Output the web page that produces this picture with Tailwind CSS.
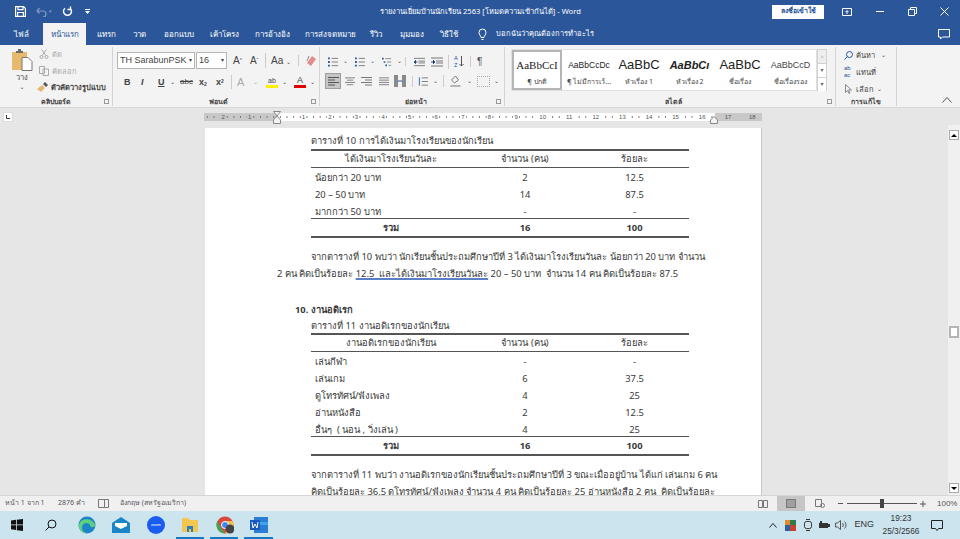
<!DOCTYPE html>
<html lang="th">
<head>
    <meta charset="utf-8">
    <title>รายงานเยี่ยมบ้านนักเรียน 2563 - Word</title>
    <script src="https://cdn.jsdelivr.net/npm/@tailwindcss/browser@4"></script>
</head>

<body class="w-[960px] h-[539px] overflow-hidden flex flex-col bg-[#e6e6e6] text-[#444] font-['Tahoma','Noto_Sans','DejaVu_Sans',sans-serif]">

    <!-- Title bar -->
    <div class="h-[23px] shrink-0 bg-[#2b579a] text-white flex items-center text-[7.6px]">
        <div class="w-[240px] flex items-center pl-[15px]">
            <svg class="w-[11px] h-[11px]" viewBox="0 0 11 11" fill="none" stroke="white" stroke-width="1.2"><path d="M.6.6h8l1.8 1.800v8H.6zM3 .6v3h5v-3M2.600 10.400V6.500h5.800v3.900"/></svg>
            <svg class="w-[11px] h-[10px] ml-[10px] opacity-40" viewBox="0 0 11 10" fill="none" stroke="white" stroke-width="1.200"><path d="M1 4h6a3 3 0 0 1 0 6M3.500 1 1 4l2.500 2.500"/></svg>
            <span class="ml-[2px] text-[5px] opacity-40">▾</span>
            <svg class="w-[11px] h-[11px] ml-[10px]" viewBox="0 0 11 11" fill="none" stroke="white" stroke-width="1.400"><path d="M8 2.200A4 4 0 1 1 3 2.200M8.500 .5v3h-3"/></svg>
            <svg class="w-[5px] h-[5px] ml-[12px]" viewBox="0 0 5 5" fill="white"><path d="M0 0h5v1H0zM0 2h5L2.500 5z"/></svg>
        </div>
        <div class="w-[532px] pl-[140px] whitespace-nowrap">รายงานเยี่ยมบ้านนักเรียน 2563 [โหมดความเข้ากันได้] - Word</div>
        <div class="w-[52px] h-[14px] bg-white text-[#2b579a] flex items-center justify-center text-[7px] font-semibold">ลงชื่อเข้าใช้</div>
        <div class="flex items-center">
            <svg class="w-[10px] h-[8px] ml-[18px]" viewBox="0 0 10 8" fill="none" stroke="white"><path d="M.5.500h9v7h-9zM5 6V3M3.500 4 5 2.500 6.500 4"/></svg>
            <div class="w-[8px] h-px bg-white ml-[24px]"></div>
            <svg class="w-[9px] h-[9px] ml-[24px]" viewBox="0 0 9 9" fill="none" stroke="white"><path d="M.5 2.500h6v6h-6zM2.500 2.500v-2h6v6h-2"/></svg>
            <svg class="w-[9px] h-[9px] ml-[23px]" viewBox="0 0 9 9" fill="none" stroke="white"><path d="m.5.500 8 8M8.500.500l-8 8"/></svg>
        </div>
    </div>

    <!-- Ribbon tabs -->
    <div class="h-[22px] shrink-0 bg-[#2b579a] text-white flex items-center text-[8px] relative">
        <div class="flex items-center w-[478px] pl-[14px]">
            <span class="w-[29px]">ไฟล์</span>
            <span class="w-[43px] h-[22px] bg-[#f3f3f3] text-[#2b579a] flex items-center justify-center mr-[11px]">หน้าแรก</span>
            <span class="w-[36px]">แทรก</span>
            <span class="w-[31px]">วาด</span>
            <span class="w-[46px]">ออกแบบ</span>
            <span class="w-[45px]">เค้าโครง</span>
            <span class="w-[50px]">การอ้างอิง</span>
            <span class="w-[65px]">การส่งจดหมาย</span>
            <span class="w-[30px]">รีวิว</span>
            <span class="w-[40px]">มุมมอง</span>
            <span>วิธีใช้</span>
        </div>
        <svg class="w-[9px] h-[12px]" viewBox="0 0 9 12" fill="none" stroke="white"><path d="M3 9.500C3 7.500 1 7 1 4.500a3.500 3.500 0 0 1 7 0C8 7 6 7.500 6 9.500zM3.500 11.500h2"/></svg>
        <span class="ml-[9px] text-[7.5px]">บอกฉันว่าคุณต้องการทำอะไร</span>
        <svg class="w-[12px] h-[11px] absolute left-[938px] top-[6px]" viewBox="0 0 12 11" fill="none" stroke="white"><path d="M.5.500h11v7.500h-7l-2 2v-2h-2z"/></svg>
    </div>

    <!-- Ribbon -->
    <div class="h-[63px] shrink-0 bg-[#f3f3f3] border-b border-[#d6d6d6] flex text-[7.5px]">
        <!-- Clipboard -->
        <div class="w-[113px] shrink-0 border-r border-[#d4d4d4] mt-[2px] mb-[1px] flex flex-col">
            <div class="flex-1 flex pl-[10px] pt-[2px]">
                <div class="w-[24px] flex flex-col items-center">
                    <svg class="w-[22px] h-[22px]" viewBox="0 0 22 22"><rect x="1" y="3" width="15" height="18" fill="#e6b96e"/><path d="M5 4V2h2V0h3v2h2v2z" fill="#6b6b6b"/><path d="M11 8.500h6l4 4v9H11z" fill="white" stroke="#777"/></svg>
                    <span class="mt-[1px] leading-[11px]">วาง</span>
                    <span class="text-[6px] leading-[8px]">⌄</span>
                </div>
                <div class="pl-[3px] -mt-[1px] flex flex-col gap-[4px] text-[#aaa] leading-[12.5px]">
                    <div class="flex items-center gap-[3px] pl-[2px]"><svg class="w-[10px] h-[10px]" viewBox="0 0 10 10" fill="none" stroke="#aaa"><circle cx="2.500" cy="8" r="1.500"/><circle cx="7.500" cy="8" r="1.500"/><path d="M3 6.500 7.500.5M7 6.500 2.500.5"/></svg>ตัด</div>
                    <div class="flex items-center gap-[3px] pl-[2px]"><svg class="w-[10px] h-[10px]" viewBox="0 0 10 10" fill="none" stroke="#aaa"><path d="M.5.500h5v7h-5zM4 3h5.500v6.500H4z"/></svg>คัดลอก</div>
                    <div class="flex items-center gap-[3px] text-[#444] font-semibold"><svg class="w-[11px] h-[10px]" viewBox="0 0 11 10"><path d="M0 7 5 3l3 3-4 4z" fill="#e6b96e"/><path d="m6 2 2-2 3 3-2 2z" fill="#555"/></svg>ตัวคัดวางรูปแบบ</div>
                </div>
            </div>
            <div class="h-[8px] flex items-center justify-center relative text-[7px] font-semibold">คลิปบอร์ด<span class="absolute right-[3px] top-[1px] w-[5px] h-[5px] border border-[#999]"></span></div>
        </div>
        <!-- Font -->
        <div class="w-[207px] shrink-0 border-r border-[#d4d4d4] mt-[2px] mb-[1px] flex flex-col pl-[4px]">
            <div class="flex items-center pt-[5px] gap-[1px]">
                <div class="w-[78px] h-[17px] bg-white border border-[#b5b5b5] flex items-center justify-between px-[2px] text-[9px]"><span class="font-['Liberation_Sans']">TH SarabunPSK</span><span class="text-[6px]">▾</span></div>
                <div class="w-[31px] h-[17px] bg-white border border-[#b5b5b5] flex items-center justify-between px-[2px] text-[9px]"><span class="font-['Liberation_Sans']">16</span><span class="text-[6px]">▾</span></div>
                <div class="flex items-center pl-[5px] text-[10px] font-['Liberation_Sans']"><span class="w-[17px]">A<sup class="text-[5px]">^</sup></span><span class="w-[15px]">A<sup class="text-[5px]">ˇ</sup></span><span class="w-[33px] border-l border-[#ccc] pl-[5px] whitespace-nowrap">Aa <span class="text-[6px]">⌄</span></span><span class="border-l border-[#ccc] pl-[7px] flex"><svg class="w-[11px] h-[11px]" viewBox="0 0 11 11"><path d="m1 8 5-7 4 3-5 7z" fill="#e58a8a"/><path d="M3 1 1 6" stroke="#888"/></svg></span></div>
            </div>
            <div class="flex items-center pt-[6px] pl-[7px] text-[9px] font-['Liberation_Sans'] text-[#444] leading-[14px]">
                <b class="w-[17px]">B</b><i class="w-[17px] font-semibold">I</i><u class="w-[12px] font-semibold">U</u><span class="w-[10px] text-[6px]">⌄</span><s class="w-[19px] text-[8px]">abc</s><span class="w-[17px] font-semibold">x<sub class="text-[5px]">2</sub></span><span class="w-[16px] font-semibold border-r border-[#ccc]">x<sup class="text-[5px]">2</sup></span>
                <span class="w-[21px] pl-[5px] text-[#aaa] text-[11px]">A</span><span class="w-[9px] text-[6px] text-[#aaa]">⌄</span>
                <span class="w-[20px] flex flex-col items-center text-[7px] leading-[8px]">ab<span class="w-[12px] h-[3px] bg-[#fff200]"></span></span><span class="w-[8px] text-[6px]">⌄</span>
                <span class="w-[20px] flex flex-col items-center leading-[9px]">A<span class="w-[12px] h-[3px] bg-[#e00000]"></span></span><span class="text-[6px]">⌄</span>
            </div>
            <div class="mt-auto h-[8px] flex items-center justify-center relative text-[7px] font-semibold">ฟอนต์<span class="absolute right-[3px] top-[1px] w-[5px] h-[5px] border border-[#999]"></span></div>
        </div>
        <!-- Paragraph -->
        <div class="w-[185px] shrink-0 border-r border-[#d4d4d4] mt-[2px] mb-[1px] flex flex-col pl-[8px]">
            <div class="flex items-center pt-[8px] text-[#555] h-[21px]">
                <svg class="w-[10px] h-[10px]" viewBox="0 0 11 10" stroke="#2b579a"><path d="M0 1h2M0 5h2M0 9h2" stroke-width="2"/><path d="M4 1h7M4 5h7M4 9h7" stroke="#777"/></svg><span class="text-[6px] w-[17px] pl-[5px]">⌄</span>
                <svg class="w-[10px] h-[10px]" viewBox="0 0 11 10" stroke="#2b579a"><path d="M0 1h2M0 5h2M0 9h2" stroke-width="2"/><path d="M4 1h7M4 5h7M4 9h7" stroke="#777"/></svg><span class="text-[6px] w-[17px] pl-[5px]">⌄</span>
                <svg class="w-[10px] h-[10px]" viewBox="0 0 12 10" stroke="#2b579a"><path d="M0 1h2M2 5h2M4 9h2" stroke-width="2"/><path d="M4 1h7M6 5h5M8 9h3" stroke="#777"/></svg><span class="text-[6px] w-[14px] pl-[5px] border-r border-[#ccc]">⌄</span>
                <svg class="w-[11px] h-[10px] ml-[8px]" viewBox="0 0 12 10" stroke="#777"><path d="M0 1h12M5 4h7M5 6h7M0 9h12"/><path d="M4 5H0m2-2-2 2 2 2" stroke="#2b579a"/></svg>
                <svg class="w-[12px] h-[10px] ml-[6px]" viewBox="0 0 12 10" stroke="#777"><path d="M0 1h12M5 4h7M5 6h7M0 9h12"/><path d="M0 5h4M2 3l2 2-2 2" stroke="#2b579a"/></svg>
                <span class="border-l border-[#ccc] ml-[5px] pl-[5px] flex items-center w-[22px] h-[14px] text-[#2b579a]"><span class="text-[6px] leading-[7px]">A<br>Z</span><svg class="w-[5px] h-[11px] ml-[1px]" viewBox="0 0 5 11" fill="none" stroke="#555"><path d="M2.500 0v10M.5 8l2 2 2-2"/></svg></span>
                <span class="border-l border-[#ccc] pl-[6px] text-[10px] font-['Liberation_Sans'] leading-[11px]">¶</span>
            </div>
            <div class="flex items-center pt-[5px] -ml-[3px]">
                <div class="w-[16px] h-[16px] bg-[#c6c6c6] border border-[#9e9e9e] flex items-center justify-center"><svg class="w-[11px] h-[9px]" viewBox="0 0 11 9" stroke="#555"><path d="M0 .5h11M0 3h7M0 5.500h11M0 8h7"/></svg></div>
                <svg class="w-[10px] h-[9px] ml-[4px]" viewBox="0 0 11 9" stroke="#777"><path d="M0 .5h11M2 3h7M0 5.500h11M2 8h7"/></svg>
                <svg class="w-[11px] h-[9px] ml-[6px]" viewBox="0 0 11 9" stroke="#777"><path d="M0 .5h11M4 3h7M0 5.500h11M4 8h7"/></svg>
                <svg class="w-[10px] h-[9px] ml-[7px]" viewBox="0 0 11 9" stroke="#777"><path d="M0 .5h11M0 3h11M0 5.500h11M0 8h11"/></svg>
                <svg class="w-[12px] h-[12px] ml-[5px]" viewBox="0 0 12 12"><path d="M0 0h4v12H0zM8 0h4v12H8z" fill="#8a8a8a"/><path d="M4 6h4" stroke="#2b579a"/></svg>
                <span class="border-l border-[#ccc] pl-[5px] ml-[6px] flex"><svg class="w-[10px] h-[11px]" viewBox="0 0 11 11" stroke="#777"><path d="M4 1.500h7M4 5.500h7M4 9.500h7"/><path d="M1.500 1v9" stroke="#2b579a"/></svg></span><span class="text-[6px] w-[15px] pl-[5px]">⌄</span>
                <span class="border-l border-[#ccc] pl-[5px] flex"><svg class="w-[13px] h-[12px]" viewBox="0 0 12 12" fill="none" stroke="#777"><path d="m2 5 4-4 3 4-4 3zM1 11h10"/></svg></span><span class="text-[6px] w-[15px] pl-[5px]">⌄</span>
                <span class="w-[13px] h-[11px] border border-[#aaa] border-dotted"></span><span class="text-[6px] pl-[4px]">⌄</span>
            </div>
            <div class="mt-auto h-[8px] flex items-center justify-center relative text-[7px] font-semibold">ย่อหน้า<span class="absolute right-[3px] top-[1px] w-[5px] h-[5px] border border-[#999]"></span></div>
        </div>
        <!-- Styles -->
        <div class="w-[331px] shrink-0 border-r border-[#d4d4d4] mt-[2px] mb-[1px] flex flex-col pl-[6px]">
            <div class="flex mt-[2px] h-[42px] w-[316px]">
                <div class="flex-1 bg-white flex border border-[#e0e0e0]">
                    <div class="w-[50px] shrink-0 border-2 border-[#b5b5b5] flex flex-col items-center pt-[7px] gap-[6px] overflow-hidden">
                        <span class="text-[11px] leading-[12px] whitespace-nowrap font-['Liberation_Serif'] text-[#222]">AaBbCcI</span><span class="text-[7px] leading-[9px]">¶ ปกติ</span>
                    </div>
                    <div class="w-[50px] ml-[2px] shrink-0 flex flex-col items-center pt-[9px] gap-[6px] overflow-hidden">
                        <span class="text-[8.5px] leading-[12px] whitespace-nowrap font-['Liberation_Sans'] text-[#222]">AaBbCcDc</span><span class="text-[7px] leading-[9px] whitespace-nowrap">¶ ไม่มีการเว้...</span>
                    </div>
                    <div class="w-[50px] shrink-0 flex flex-col items-center pt-[9px] gap-[6px] overflow-hidden">
                        <span class="text-[13px] leading-[12px] whitespace-nowrap font-['Liberation_Sans'] text-[#222]">AaBbC</span><span class="text-[7px] leading-[9px]">หัวเรื่อง 1</span>
                    </div>
                    <div class="w-[51px] shrink-0 flex flex-col items-center pt-[9px] gap-[6px] overflow-hidden">
                        <span class="text-[11px] leading-[12px] whitespace-nowrap font-['Liberation_Sans'] italic font-semibold text-[#222]">AaBbCı</span><span class="text-[7px] leading-[9px]">หัวเรื่อง 2</span>
                    </div>
                    <div class="w-[50px] shrink-0 flex flex-col items-center pt-[9px] gap-[6px] overflow-hidden">
                        <span class="text-[13px] leading-[12px] whitespace-nowrap font-['Liberation_Sans'] text-[#222]">AaBbC</span><span class="text-[7px] leading-[9px]">ชื่อเรื่อง</span>
                    </div>
                    <div class="w-[51px] shrink-0 flex flex-col items-center pt-[9px] gap-[6px] overflow-hidden">
                        <span class="text-[9px] leading-[12px] whitespace-nowrap font-['Liberation_Sans'] text-[#444]">AaBbCcD</span><span class="text-[7px] leading-[9px]">ชื่อเรื่องรอง</span>
                    </div>
                </div>
                <div class="w-[10px] shrink-0 border border-[#d0d0d0] flex flex-col text-[6px] text-center leading-[13px] text-[#666]"><span class="bg-[#eee] text-[#ccc]">▴</span><span class="bg-white border-y border-[#d0d0d0]">▾</span><span class="bg-white">▾</span></div>
            </div>
            <div class="mt-auto h-[8px] flex items-center justify-center relative text-[7px] font-semibold">สไตล์<span class="absolute right-[3px] top-[1px] w-[5px] h-[5px] border border-[#999]"></span></div>
        </div>
        <!-- Editing -->
        <div class="w-[61px] shrink-0 border-r border-[#d4d4d4] mt-[2px] mb-[1px] flex flex-col pl-[8px]">
            <div class="flex flex-col gap-[4px] pt-[2px] leading-[12px]">
                <div class="flex items-center gap-[3px] whitespace-nowrap"><svg class="w-[9px] h-[9px]" viewBox="0 0 9 9" fill="none" stroke="#2b579a"><circle cx="5.500" cy="3.500" r="3"/><path d="M3.500 5.500 .5 8.500"/></svg>ค้นหา <span class="text-[6px] pl-[3px]">⌄</span></div>
                <div class="flex items-center gap-[3px] whitespace-nowrap"><span class="text-[6px] leading-[7px] text-[#2b579a] font-['Liberation_Sans'] w-[9px]">ab<br>ac</span>แทนที่</div>
                <div class="flex items-center gap-[3px] whitespace-nowrap"><svg class="w-[9px] h-[10px]" viewBox="0 0 9 10" fill="none" stroke="#888"><path d="M1.500.5v8l2-2 1.500 3 1-.5-1.500-3h3z"/></svg>เลือก <span class="text-[6px]">⌄</span></div>
            </div>
            <div class="mt-auto h-[8px] flex items-center justify-center text-[7px] font-semibold pr-[8px]">การแก้ไข</div>
        </div>
        <div class="flex-1 relative"><svg class="absolute right-[8px] bottom-[4px] w-[10px] h-[6px]" viewBox="0 0 10 6" fill="none" stroke="#555"><path d="m.5 5.500 4.500-5 4.500 5"/></svg></div>
    </div>

    <!-- Ruler -->
    <div class="h-[17px] shrink-0 bg-[#e6e6e6] flex items-center relative">
        <div class="w-[10px] h-[10px] ml-[3px] bg-white border border-[#ddd] flex items-end justify-center pb-[2px]"><svg class="w-[4px] h-[4px]" viewBox="0 0 4 4" fill="none" stroke="#333"><path d="M.5 0v3.500H4"/></svg></div>
        <div class="ml-[191px] w-[73px] h-[8px] bg-[#c8c8c8] flex justify-end pr-[14px] text-[6px] leading-[8px] text-[#555] font-['Liberation_Sans'] bg-[radial-gradient(circle,#777_0.6px,transparent_1px)] bg-[length:6.65px_8px]">
            <span class="w-[26.6px] flex justify-center"><span class="bg-[#c8c8c8] px-px">2</span></span><span class="w-[26.6px] flex justify-center"><span class="bg-[#c8c8c8] px-px">1</span></span>
        </div>
        <div class="w-[438px] h-[8px] bg-white flex pl-[13px] text-[6px] leading-[8px] text-[#555] font-['Liberation_Sans'] bg-[radial-gradient(circle,#777_0.6px,transparent_1px)] bg-[length:6.65px_8px]">
            <span class="w-[26.6px] shrink-0 flex justify-center"><span class="bg-white px-px">1</span></span>
            <span class="w-[26.6px] shrink-0 flex justify-center"><span class="bg-white px-px">2</span></span>
            <span class="w-[26.6px] shrink-0 flex justify-center"><span class="bg-white px-px">3</span></span>
            <span class="w-[26.6px] shrink-0 flex justify-center"><span class="bg-white px-px">4</span></span>
            <span class="w-[26.6px] shrink-0 flex justify-center"><span class="bg-white px-px">5</span></span>
            <span class="w-[26.6px] shrink-0 flex justify-center"><span class="bg-white px-px">6</span></span>
            <span class="w-[26.6px] shrink-0 flex justify-center"><span class="bg-white px-px">7</span></span>
            <span class="w-[26.6px] shrink-0 flex justify-center"><span class="bg-white px-px">8</span></span>
            <span class="w-[26.6px] shrink-0 flex justify-center"><span class="bg-white px-px">9</span></span>
            <span class="w-[26.6px] shrink-0 flex justify-center"><span class="bg-white px-px">10</span></span>
            <span class="w-[26.6px] shrink-0 flex justify-center"><span class="bg-white px-px">11</span></span>
            <span class="w-[26.6px] shrink-0 flex justify-center"><span class="bg-white px-px">12</span></span>
            <span class="w-[26.6px] shrink-0 flex justify-center"><span class="bg-white px-px">13</span></span>
            <span class="w-[26.6px] shrink-0 flex justify-center"><span class="bg-white px-px">14</span></span>
            <span class="w-[26.6px] shrink-0 flex justify-center"><span class="bg-white px-px">15</span></span>
            <span class="w-[26.6px] shrink-0 flex justify-center"><span class="bg-white px-px">16</span></span>
        </div>
        <div class="w-[47px] h-[8px] bg-[#c8c8c8] flex overflow-hidden text-[6px] leading-[8px] text-[#555] font-['Liberation_Sans']">
            <span class="w-[26px] shrink-0 text-center">17</span><span class="w-[21px] shrink-0 pl-[8px]">18</span>
        </div>
        <svg class="absolute left-[273px] top-[3px] w-[8px] h-[13px]" viewBox="0 0 8 13" fill="#f3f3f3" stroke="#888"><path d="M.5.500h7L4 5zM4 5l3.500 4v3.500H.5V9z"/></svg>
        <svg class="absolute left-[710px] top-[8px] w-[8px] h-[8px]" viewBox="0 0 8 8" fill="#f3f3f3" stroke="#888"><path d="M4 .5 7.500 4v3.500H.5V4z"/></svg>
    </div>

    <!-- Document -->
    <div class="h-[370px] shrink-0 flex overflow-hidden">
        <div class="w-[948px] pl-[205px] pt-[3px]">
            <div class="w-[557px] bg-white h-[500px] border-r border-[#c8c8c8] text-[9.4px] text-[#3a3a3a] leading-[17px] pt-[5px]">
                <div class="ml-[106px] w-[378px]">
                    <div class="leading-[16px] whitespace-nowrap">ตารางที่ 10 การได้เงินมาโรงเรียนของนักเรียน</div>
                    <div class="border-t-2 border-[#555]"></div>
                    <div class="grid grid-cols-[159px_110px_109px] text-center leading-[16px] border-b border-[#555]"><span>ได้เงินมาโรงเรียนวันละ</span><span>จำนวน (คน)</span><span>ร้อยละ</span></div>
                    <div class="grid grid-cols-[159px_110px_109px] text-center pt-[1px] -mb-[2px]">
                        <span class="text-left pl-[4px]">น้อยกว่า 20 บาท</span><span>2</span><span>12.5</span>
                        <span class="text-left pl-[4px]">20 – 50 บาท</span><span>14</span><span>87.5</span>
                        <span class="text-left pl-[4px]">มากกว่า 50 บาท</span><span>-</span><span>-</span>
                    </div>
                    <div class="grid grid-cols-[159px_110px_109px] text-center font-bold border-t border-[#555] pt-[1px] leading-[16px]"><span>รวม</span><span>16</span><span>100</span></div>
                    <div class="border-t-2 border-[#555]"></div>
                </div>
                <div class="pl-[72px] pt-[10px]">
                    <div class="pl-[34px] whitespace-pre">จากตารางที่ 10 พบว่า นักเรียนชั้นประถมศึกษาปีที่ 3 ได้เงินมาโรงเรียนวันละ น้อยกว่า 20 บาท จำนวน</div>
                    <div class="whitespace-pre">2 คน คิดเป็นร้อยละ <span class="underline decoration-[#5b7fc7] decoration-[1.5px]">12.5  และได้เงินมาโรงเรียนวันละ</span> 20 – 50 บาท  จำนวน 14 คน คิดเป็นร้อยละ 87.5</div>
                </div>
                <div class="pl-[90px] pt-[19px] font-bold">10. งานอดิเรก</div>
                <div class="ml-[106px] w-[378px]">
                    <div class="leading-[15px] whitespace-nowrap">ตารางที่ 11 งานอดิเรกของนักเรียน</div>
                    <div class="border-t-2 border-[#555]"></div>
                    <div class="grid grid-cols-[159px_110px_109px] text-center leading-[16px] border-b border-[#555]"><span>งานอดิเรกของนักเรียน</span><span>จำนวน (คน)</span><span>ร้อยละ</span></div>
                    <div class="grid grid-cols-[159px_110px_109px] text-center pt-[1px] -mb-[2px]">
                        <span class="text-left pl-[4px]">เล่นกีฬา</span><span>-</span><span>-</span>
                        <span class="text-left pl-[4px]">เล่นเกม</span><span>6</span><span>37.5</span>
                        <span class="text-left pl-[4px]">ดูโทรทัศน์/ฟังเพลง</span><span>4</span><span>25</span>
                        <span class="text-left pl-[4px]">อ่านหนังสือ</span><span>2</span><span>12.5</span>
                        <span class="text-left pl-[4px] whitespace-pre">อื่นๆ  ( นอน , วิ่งเล่น )</span><span>4</span><span>25</span>
                    </div>
                    <div class="grid grid-cols-[159px_110px_109px] text-center font-bold border-t border-[#555] pt-[1px] leading-[16px]"><span>รวม</span><span>16</span><span>100</span></div>
                    <div class="border-t-2 border-[#555]"></div>
                </div>
                <div class="pl-[106px] pt-[10px]">
                    <div class="whitespace-pre">จากตารางที่ 11 พบว่า งานอดิเรกของนักเรียนชั้นประถมศึกษาปีที่ 3 ขณะเมื่ออยู่บ้าน ได้แก่ เล่นเกม 6 คน</div>
                    <div class="whitespace-pre">คิดเป็นร้อยละ 36.5 ดูโทรทัศน์/ฟังเพลง จำนวน 4 คน คิดเป็นร้อยละ 25 อ่านหนังสือ 2 คน  คิดเป็นร้อยละ</div>
                </div>
            </div>
        </div>
        <!-- Scrollbar -->
        <div class="w-[12px] bg-[#f0f0f0] flex flex-col items-center pt-[5px] pb-[2px] relative">
            <span class="w-[10px] h-[10px] bg-white border border-[#aaa] flex items-center justify-center"><span class="border-x-[3px] border-x-transparent border-b-[3px] border-b-black"></span></span>
            <span class="absolute top-[201px] left-[1px] w-[10px] h-[12px] bg-white border-2 border-[#b5b5b5]"></span>
            <span class="mt-auto w-[10px] h-[10px] bg-white border border-[#aaa] flex items-center justify-center"><span class="border-x-[3px] border-x-transparent border-t-[3px] border-t-black"></span></span>
        </div>
    </div>

    <!-- Status bar -->
    <div class="h-[16px] shrink-0 bg-[#f0f0f0] border-t border-[#d6d6d6] flex items-center text-[7px] text-[#555] whitespace-nowrap">
        <span class="pl-[5px] w-[58px]">หน้า 1 จาก 1</span>
        <span class="w-[40px]">2876 คำ</span>
        <svg class="w-[11px] h-[9px]" viewBox="0 0 11 9" fill="none" stroke="#777"><path d="M.5.500h6v8h-6zM6.500.500h4v8h-4z"/></svg>
        <span class="pl-[11px] w-[640px]">อังกฤษ (สหรัฐอเมริกา)</span>
        <div class="w-[28px] flex justify-center"><svg class="w-[10px] h-[8px]" viewBox="0 0 10 8" fill="none" stroke="#777"><path d="M.5.500h4v7h-4zM5.500.500h4v7h-4z"/></svg></div>
        <div class="w-[28px] h-[15px] bg-[#c6c6c6] flex items-center justify-center"><div class="w-[10px] h-[9px] bg-[#a0a0a0] border border-[#777]"></div></div>
        <div class="w-[30px] flex justify-center"><svg class="w-[10px] h-[9px]" viewBox="0 0 10 9" fill="none" stroke="#777"><path d="M.5.500h6v7h-6z"/><circle cx="7.500" cy="6.500" r="2"/></svg></div>
        <div class="w-[5px] h-px bg-[#555] ml-[3px]"></div>
        <div class="w-[70px] h-px bg-[#555] ml-[4px] relative"><span class="absolute left-[33px] -top-[4px] w-[4px] h-[9px] bg-[#444]"></span></div>
        <svg class="w-[6px] h-[6px] ml-[3px]" viewBox="0 0 6 6" stroke="#555"><path d="M0 3h6M3 0v6"/></svg>
        <span class="pl-[11px] text-[8px] font-['Liberation_Sans']">100%</span>
    </div>

    <!-- Taskbar -->
    <div class="h-[28px] shrink-0 bg-[#cbe4ee] flex items-center relative text-[#222]">
        <div class="flex items-center pl-[11px] h-full">
            <svg class="w-[12px] h-[12px]" viewBox="0 0 12 12" fill="#111"><path d="M0 1.500 5 .8v4.700H0zM5.800.7 12 0v5.500H5.800zM0 6.300h5V11l-5-.7zM5.800 6.300H12V12l-6.200-.8z"/></svg>
            <svg class="w-[12px] h-[12px] ml-[22px]" viewBox="0 0 12 12" fill="none" stroke="#111"><circle cx="7" cy="5" r="4"/><path d="M4 8 .5 11.500"/></svg>
            <svg class="w-[18px] h-[18px] ml-[21px]" viewBox="0 0 18 18"><circle cx="9" cy="9" r="8.500" fill="#1a86c8"/><path d="M1 8c2-6 13-7 16 1 0 3-5 3-5 0-1-3-8-3-8 3 0 3 3 5 6 5-5 1-10-3-9-9z" fill="#5fd07f"/></svg>
            <svg class="w-[18px] h-[16px] ml-[16px]" viewBox="0 0 18 16"><path d="M0 6 9 0l9 6v10H0z" fill="#1a86c8"/><path d="M3 6h12v3l-6 3-6-3z" fill="white"/></svg>
            <div class="w-[18px] h-[18px] ml-[17px] rounded-full bg-[#1a5cf0] text-white text-[4px] flex items-center justify-center font-['Liberation_Sans']">zoom</div>
            <svg class="w-[16px] h-[14px] ml-[17px]" viewBox="0 0 16 14"><path d="M0 0h6l2 2h8v12H0z" fill="#f3c64f"/><path d="M5 8h6v6H9v-3H7v3H5z" fill="#2c7fc0"/></svg>
            <svg class="w-[18px] h-[18px] ml-[18px]" viewBox="0 0 18 18"><circle cx="9" cy="9" r="8.500" fill="#d9483b"/><path d="M1.500 5 5 12l4 5.500A8.500 8.500 0 0 1 1.500 5z" fill="#3aa757"/><path d="M9 5h7.500A8.500 8.500 0 0 1 9 17.500L12.500 11z" fill="#f6c343"/><circle cx="9" cy="9" r="3.500" fill="#4285f4" stroke="white"/><circle cx="14" cy="13" r="4.500" fill="#444"/></svg>
            <svg class="w-[18px] h-[16px] ml-[16px]" viewBox="0 0 18 16"><path d="M4 0h14v16H4z" fill="#2b7cd3"/><path d="M4 5h14v3H4z" fill="#41a5ee"/><rect y="3" width="10" height="10" fill="#185abd"/><path d="m2 5 1 6 2-4 2 4 1-6" fill="none" stroke="white"/></svg>
        </div>
        <span class="absolute left-[176px] bottom-0 w-[28px] h-[2px] bg-[#1a78c2]"></span>
        <span class="absolute left-[210px] bottom-0 w-[28px] h-[2px] bg-[#1a78c2]"></span>
        <span class="absolute left-[244px] bottom-0 w-[29px] h-[2px] bg-[#1a78c2]"></span>
        <div class="ml-auto flex items-center h-full font-['Liberation_Sans'] text-[#333]">
            <svg class="w-[8px] h-[5px]" viewBox="0 0 8 5" fill="none" stroke="#222"><path d="m.5 4.500 3.500-4 3.500 4"/></svg>
            <svg class="w-[11px] h-[11px] ml-[8px]" viewBox="0 0 11 11"><path d="M0 0h5v5H0z" fill="#e08a2e"/><path d="M5 0h6v5H5z" fill="#2e7d4f"/><path d="M0 5h5v6H0z" fill="#2e5fa0"/><path d="M5 5h6v6H5z" fill="#c8402e"/></svg>
            <svg class="w-[8px] h-[12px] ml-[8px]" viewBox="0 0 8 12" fill="none" stroke="#333"><rect x=".5" y="2.500" width="7" height="7" rx="2"/><path d="M2 .5h4M2 11.500h4"/></svg>
            <svg class="w-[11px] h-[8px] ml-[7px]" viewBox="0 0 11 8"><path d="M0 2h9v5H0z" fill="#333"/><path d="M9 3h2v3H9zM1 0h2v2H1z" fill="#333"/></svg>
            <svg class="w-[12px] h-[10px] ml-[5px]" viewBox="0 0 12 10" fill="none" stroke="#555"><path d="M.5 3h2l3-2.500v9l-3-2.500h-2zM7.500 3c1 1 1 3 0 4M9.500 1.500c2 2 2 5 0 7"/></svg>
            <span class="ml-[7px] text-[9px]">ENG</span>
            <div class="ml-[8px] w-[38px] flex flex-col items-center leading-[13px] text-[8.3px]"><span>19:23</span><span>25/3/2566</span></div>
            <svg class="w-[12px] h-[11px] ml-[11px] mr-[17px]" viewBox="0 0 12 11" fill="none" stroke="#222"><path d="M.5.500h11v8H7.500l-1.500 2-1.500-2h-4z"/></svg>
        </div>
    </div>

</body>
</html>
